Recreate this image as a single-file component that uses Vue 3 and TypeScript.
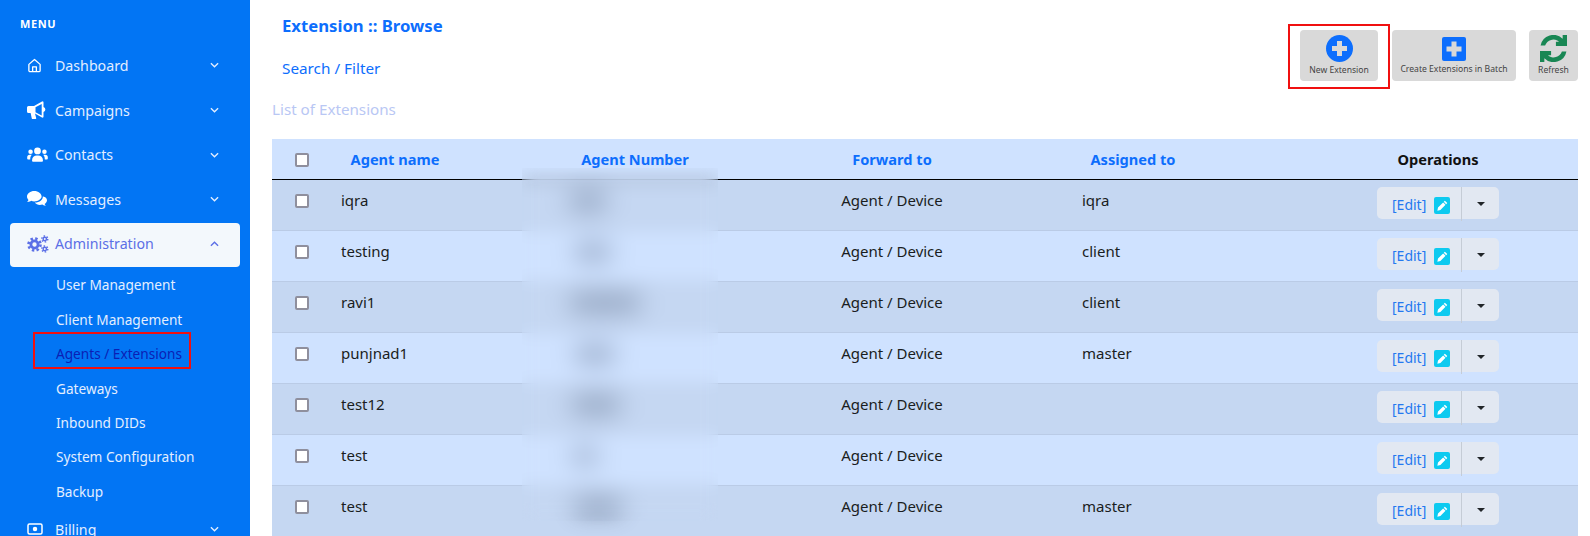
<script setup lang="ts">
interface MenuItem {
  label: string;
  icon: string;
  open?: boolean;
}

interface Extension {
  name: string;
  assigned: string;
  blobLeft: number;
  blobWidth: number;
}

const topMenu: MenuItem[] = [
  { label: 'Dashboard', icon: 'home' },
  { label: 'Campaigns', icon: 'bullhorn' },
  { label: 'Contacts', icon: 'users' },
  { label: 'Messages', icon: 'comments' },
  { label: 'Administration', icon: 'cogs', open: true },
];

const subMenu = ['User Management', 'Client Management', 'Agents / Extensions', 'Gateways', 'Inbound DIDs', 'System Configuration', 'Backup'];

const extensions: Extension[] = [
  { name: 'iqra', assigned: 'iqra', blobLeft: 112, blobWidth: 34 },
  { name: 'testing', assigned: 'client', blobLeft: 118, blobWidth: 32 },
  { name: 'ravi1', assigned: 'client', blobLeft: 112, blobWidth: 68 },
  { name: 'punjnad1', assigned: 'master', blobLeft: 118, blobWidth: 36 },
  { name: 'test12', assigned: '', blobLeft: 114, blobWidth: 46 },
  { name: 'test', assigned: '', blobLeft: 116, blobWidth: 20 },
  { name: 'test', assigned: 'master', blobLeft: 116, blobWidth: 46 },
];
</script>

<template>
  <div class="page">
    <aside class="sidebar">
      <div class="menu-title">MENU</div>
      <nav class="menu">
        <a v-for="item in topMenu" :key="item.label" class="menu-item" :class="{ active: item.open }">
          <span class="menu-icon">
            <svg v-if="item.icon === 'home'" viewBox="0 0 16 16" width="15" height="15" fill="none" stroke="currentColor" stroke-width="1.4" stroke-linejoin="round">
              <path d="M2 6.8 8 1.6l6 5.2v6.4a1.4 1.4 0 0 1-1.4 1.4H3.4A1.4 1.4 0 0 1 2 13.2z" />
              <path d="M6 14.6V9.4h4v5.2" />
            </svg>
            <svg v-else-if="item.icon === 'bullhorn'" viewBox="0 0 20 18" width="20" height="18" fill="currentColor">
              <path d="M0 6.5A1.5 1.5 0 0 1 1.5 5H7l8-4.5a1 1 0 0 1 1.5.9V6a2.6 2.6 0 0 1 0 5v4.6a1 1 0 0 1-1.5.9L8 12.5 9.2 17a.8.8 0 0 1-.8 1H5.6a.8.8 0 0 1-.8-.6L3.600 12H1.500A1.500 1.500 0 0 1 0 10.500zM8.500 6.200v5.100l6.200 3.200V3z" />
            </svg>
            <svg v-else-if="item.icon === 'users'" viewBox="0 0 22 16" width="21" height="15" fill="currentColor">
              <circle cx="11" cy="4.2" r="3.6" />
              <circle cx="3.6" cy="5" r="2.4" />
              <circle cx="18.4" cy="5" r="2.4" />
              <path d="M5.2 14a5 5 0 0 1 5-5h1.600a5 5 0 0 1 5 5v.6a1 1 0 0 1-1 1H6.200a1 1 0 0 1-1-1zM0 11a2.800 2.800 0 0 1 2.800-2.800h2a7 7 0 0 0-1.600 5H1a1 1 0 0 1-1-1zM22 11a2.800 2.800 0 0 0-2.800-2.800h-2a7 7 0 0 1 1.600 5H21a1 1 0 0 0 1-1z" />
            </svg>
            <svg v-else-if="item.icon === 'comments'" viewBox="0 0 20 16" width="20" height="16" fill="currentColor">
              <path d="M7.300 0C3.300 0 0 2.500 0 5.600c0 1.300.6 2.500 1.500 3.400-.4.900-1.100 1.600-1.400 2 2 .1 3.400-.7 4-1.200 1 .4 2.100.6 3.200.6 4 0 7.300-2.400 7.300-4.800C14.600 2.500 11.300 0 7.300 0z" />
              <path d="M15.800 5.500c.2 3.300-3 6-8 6.100 1 1.500 3 2.400 5 2.400.9 0 1.700-.1 2.500-.4.6.5 1.800 1.200 3.500 1.100-.3-.3-.9-1-1.200-1.700 1.500-.9 2.400-2.300 2.400-3.800 0-1.800-1.600-3.300-3.800-3.700z" />
            </svg>
            <svg v-else viewBox="0 0 22 18" width="22" height="18" fill="none" stroke="currentColor">
              <circle cx="7.500" cy="9.500" r="3.600" stroke-width="2.800" />
              <circle cx="7.500" cy="9.500" r="6" stroke-width="2.600" stroke-dasharray="2.400 2.310" />
              <circle cx="17.800" cy="4" r="1.700" stroke-width="1.500" />
              <circle cx="17.800" cy="4" r="3" stroke-width="1.400" stroke-dasharray="1.500 1.640" />
              <circle cx="17.800" cy="14" r="1.700" stroke-width="1.500" />
              <circle cx="17.800" cy="14" r="3" stroke-width="1.400" stroke-dasharray="1.500 1.640" />
            </svg>
          </span>
          <span class="menu-label">{{ item.label }}</span>
          <svg class="chevron" viewBox="0 0 10 6" width="9" height="6" fill="none" stroke="currentColor" stroke-width="1.500">
            <path :d="item.open ? 'M1 5l4-4 4 4' : 'M1 1l4 4 4-4'" />
          </svg>
        </a>
      </nav>
      <div class="sub-menu">
        <a v-for="link in subMenu" :key="link" class="sub-link" :class="{ current: link === 'Agents / Extensions' }">{{ link }}</a>
      </div>
      <a class="menu-item billing">
        <span class="menu-icon">
          <svg viewBox="0 0 16 12" width="16" height="12" fill="none" stroke="currentColor" stroke-width="1.500">
            <rect x="1" y="1" width="14" height="10" rx="1.500" />
            <circle cx="8" cy="6" r="1.500" fill="currentColor" />
          </svg>
        </span>
        <span class="menu-label">Billing</span>
        <svg class="chevron" viewBox="0 0 10 6" width="9" height="6" fill="none" stroke="currentColor" stroke-width="1.500">
          <path d="M1 1l4 4 4-4" />
        </svg>
      </a>
    </aside>

    <main class="content">
      <header class="top">
        <div class="heading">
          <h1>Extension :: Browse</h1>
          <a class="search-link">Search / Filter</a>
        </div>
        <div class="actions">
          <button class="action new">
            <svg viewBox="0 0 27 27" width="27" height="27">
              <circle cx="13.500" cy="13.500" r="13.500" fill="#0d6efd" />
              <path d="M11 6h5v5h5v5h-5v5h-5v-5H6v-5h5z" fill="#d9d9d9" />
            </svg>
            <span>New Extension</span>
          </button>
          <button class="action batch">
            <svg viewBox="0 0 24 24" width="24" height="24">
              <rect width="24" height="24" rx="2" fill="#0d6efd" />
              <path d="M9.500 4.500h5v5h5v5h-5v5h-5v-5h-5v-5h5z" fill="#d9d9d9" />
            </svg>
            <span>Create Extensions in Batch</span>
          </button>
          <button class="action refresh">
            <svg viewBox="0 0 28 28" width="27" height="27" fill="#198754">
              <path d="M23.500 0 28 0v11.500H16.500V7l3.300 0A9 9 0 0 0 5.300 11H.6A13.500 13.500 0 0 1 23.500 4z" />
              <path d="M4.500 28H0V16.500h11.500V21H8.200a9 9 0 0 0 14.500-4h4.700A13.500 13.500 0 0 1 4.500 24z" />
            </svg>
            <span>Refresh</span>
          </button>
        </div>
      </header>

      <div class="list-title">List of Extensions</div>

      <section class="table">
        <div class="row head">
          <div class="cell check"><span class="box"></span></div>
          <div class="cell th">Agent name</div>
          <div class="cell th">Agent Number</div>
          <div class="cell th">Forward to</div>
          <div class="cell th">Assigned to</div>
          <div class="cell th ops">Operations</div>
        </div>
        <div v-for="(ext, i) in extensions" :key="i" class="row body" :class="{ striped: i % 2 === 0 }">
          <div class="cell check"><span class="box"></span></div>
          <div class="cell name">{{ ext.name }}</div>
          <div class="cell number">
            <span class="blob" :style="{ marginLeft: ext.blobLeft + 'px', width: ext.blobWidth + 'px' }"></span>
          </div>
          <div class="cell forward">Agent / Device</div>
          <div class="cell assigned">{{ ext.assigned }}</div>
          <div class="cell op-cell">
            <div class="btn-group">
              <a class="edit"><span class="edit-label">[Edit]</span>
                <span class="pencil">
                  <svg viewBox="0 0 12 12" width="11" height="11" fill="#fff">
                    <path d="M8.600.8l2.600 2.600-1.200 1.200-2.600-2.600zM6.700 2.700l2.600 2.600-5.600 5.600-3.300.7.700-3.300z" />
                  </svg>
                </span>
              </a>
              <span class="caret-btn"><i class="caret"></i></span>
            </div>
          </div>
        </div>
        <div class="redaction"></div>
      </section>
    </main>
  </div>
</template>

<style>
html,
body {
  margin: 0;
  overflow: hidden;
  background: #fff;
}
</style>

<style scoped>
.page {
  display: flex;
  width: 1590px;
  height: 536px;
  overflow: hidden;
  font-family: "Noto Sans", "Liberation Sans", sans-serif;
  font-size: 15px;
  color: #212529;
}

.sidebar {
  width: 250px;
  flex-shrink: 0;
  background: #0275f4;
  color: #e3eeff;
  box-sizing: border-box;
  padding: 18px 10px 0;
}

.menu-title {
  margin-left: 10px;
  height: 12px;
  line-height: 12px;
  font-size: 11px;
  font-weight: 700;
  letter-spacing: 0.6px;
  color: #fff;
}

.menu {
  margin-top: 13px;
}

.menu-item {
  display: flex;
  align-items: center;
  box-sizing: border-box;
  height: 44.7px;
  padding: 0 15px 0 17px;
  border-radius: 4px;
  font-size: 14.200px;
}

.menu-item.active {
  background: #f3f8fc;
  color: #5b6fe6;
  margin-top: 1px;
  padding-bottom: 3px;
}

.menu-icon {
  width: 28px;
  display: flex;
  justify-content: flex-start;
  color: #fff;
}

.active .menu-icon {
  color: #5b6fe6;
}

.menu-label {
  flex: 1;
}

.chevron {
  margin-right: 6px;
}

.sub-menu {
  margin-top: 1px;
  padding-left: 23px;
}

.sub-link {
  display: block;
  position: relative;
  width: fit-content;
  height: 34.4px;
  line-height: 34.4px;
  padding-left: 23px;
  font-size: 13.650px;
}

.sub-link.current {
  color: #0b1fb5;
}

.sub-link.current::after {
  content: "";
  position: absolute;
  left: 0;
  top: -5px;
  width: 158px;
  height: 37px;
  box-sizing: border-box;
  border: 2px solid #f01010;
}

.billing {
  height: 44px;
  margin-top: -2px;
}

.content {
  flex: 1;
  min-width: 0;
  position: relative;
  padding: 0 12px 0 22px;
}

.top {
  display: flex;
  justify-content: space-between;
  align-items: flex-start;
  height: 96px;
}

.heading {
  padding-left: 10px;
  padding-top: 13px;
}

.heading h1 {
  margin: 0;
  font-size: 16.700px;
  line-height: 26px;
  font-weight: 700;
  color: #0d6efd;
}

.search-link {
  display: block;
  margin-top: 17px;
  line-height: 24px;
  font-size: 15.300px;
  color: #0d6efd;
}

.actions {
  display: flex;
  padding-top: 30px;
}

.action {
  position: relative;
  height: 51px;
  border: 0;
  border-radius: 4px;
  background: #d9d9d9;
  padding: 5px 0 0;
  display: flex;
  flex-direction: column;
  align-items: center;
  font-family: inherit;
  font-size: 8.600px;
  color: #444;
  white-space: nowrap;
}

.action span {
  margin-top: 1px;
  line-height: 14px;
}

.new {
  width: 78px;
  margin-right: 14px;
}

.new::after {
  content: "";
  position: absolute;
  left: -12px;
  right: -12px;
  top: -6px;
  bottom: -8px;
  border: 2px solid #f01010;
}

.batch {
  width: 124px;
  margin-right: 13px;
  padding-top: 7px;
}

.refresh {
  width: 49px;
}

.list-title {
  height: 43px;
  line-height: 26px;
  font-size: 15.200px;
  color: #b9c7f4;
}

.table {
  position: relative;
}

.row {
  display: grid;
  grid-template-columns: 59px 128px 352px 162px 320px 285px;
}

.head {
  height: 40px;
  background: #cfe2ff;
  border-bottom: 1px solid #000;
  align-items: center;
}

.head .check {
  padding-top: 1px;
}

.body {
  height: 51px;
  box-sizing: border-box;
  background: #cfe2ff;
  border-bottom: 1px solid #bacbe6;
  align-items: center;
  color: #1a1d21;
}

.body.striped {
  background: #c5d7f2;
}

.cell {
  min-width: 0;
}

.body .cell {
  padding-bottom: 10px;
}

.body .check {
  padding-bottom: 8px;
}

.check {
  padding-left: 23px;
  display: flex;
}

.box {
  display: block;
  width: 14px;
  height: 14px;
  box-sizing: border-box;
  border: 2px solid #8f8f9d;
  border-radius: 2px;
  background: #fff;
}

.th {
  text-align: center;
  font-size: 14.600px;
  font-weight: 700;
  color: #0d6efd;
}

.th.ops {
  color: #111;
  padding-left: 5px;
}

.name {
  padding-left: 10px;
}

.forward {
  text-align: center;
}

.assigned {
  padding-left: 109px;
}

.body .number {
  display: flex;
  height: 14px;
  padding-bottom: 8px;
}

.blob {
  display: block;
  height: 14px;
  background: #2c3b56;
  opacity: 0.45;
  filter: blur(11px);
}

.body .op-cell {
  padding: 0 0 0 84px;
}

.btn-group {
  display: flex;
  width: 122px;
  height: 32px;
  background: #e2e8f2;
  border-radius: 5px;
  margin-bottom: 5px;
}

.edit {
  width: 84px;
  box-sizing: border-box;
  padding-left: 15px;
  display: flex;
  align-items: center;
  gap: 8px;
  font-size: 14px;
  color: #2478f0;
}

.edit-label {
  padding-top: 4px;
}

.pencil {
  width: 16px;
  height: 17px;
  margin-top: 6px;
  background: #0dcaf0;
  border-radius: 2px;
  display: flex;
  align-items: center;
  justify-content: center;
}

.caret-btn {
  flex: 1;
  display: flex;
  align-items: center;
  justify-content: center;
  border-left: 1px solid #c5ccd6;
  margin-bottom: -2px;
}

.caret {
  display: block;
  border-top: 4px solid #212529;
  border-left: 4px solid transparent;
  border-right: 4px solid transparent;
}

.redaction {
  position: absolute;
  left: 250px;
  top: 29px;
  width: 196px;
  height: 353px;
  backdrop-filter: blur(8px);
}
</style>
